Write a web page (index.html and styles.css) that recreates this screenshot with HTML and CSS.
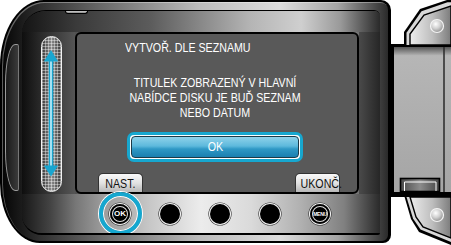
FILE: index.html
```html
<!DOCTYPE html>
<html lang="cs">
<head>
<meta charset="utf-8">
<title>Vytvoř. dle seznamu</title>
<link rel="stylesheet" href="styles.css">
</head>
<body>
<div class="device">
  <div class="cam">
    <div class="rim">
      <div class="grip"><div class="grip-strip"></div></div>
      <div class="face">
        <div class="topband"><span class="notch"></span></div>
        <div class="mid">
          <div class="leftcol">
            <div class="slider">
              <svg viewBox="0 0 18 153" width="18" height="153">
                <path d="M9 22 V131" stroke="#17a3cd" stroke-width="4.5"/>
                <path d="M9 22 V131" stroke="#c9f1fd" stroke-width="1.6"/>
                <polygon points="9,13 1.8,24.5 16.2,24.5" fill="#19a6d0"/>
                <polygon points="9,139.5 1.8,128.5 16.2,128.5" fill="#19a6d0"/>
              </svg>
            </div>
          </div>
          <div class="screen">
            <div class="title"><span class="nar">VYTVOŘ. DLE SEZNAMU</span></div>
            <div class="msg">TITULEK ZOBRAZENÝ V HLAVNÍ<br>NABÍDCE DISKU JE BUĎ SEZNAM<br>NEBO DATUM</div>
            <div class="ok-ring"><div class="ok-btn"><span class="nar">OK</span></div></div>
            <div class="tabs">
              <div class="tab"><span class="nar">NAST.</span></div>
              <div class="tab"><span class="nar">UKONČ.</span></div>
            </div>
          </div>
          <div class="rightcol"></div>
        </div>
        <div class="botband">
          <div class="keys">
            <div class="slot"><div class="ring"><div class="key key-label">OK</div></div></div>
            <div class="slot"><div class="key"></div></div>
            <div class="slot"><div class="key"></div></div>
            <div class="slot"><div class="key"></div></div>
            <div class="slot"><div class="key key-label key-menu">MENU</div></div>
          </div>
        </div>
      </div>
    </div>
  </div>
  <svg class="hinge" width="60" height="245" viewBox="0 0 60 245">
    <defs>
      <linearGradient id="kg" x1="0" x2="1" y1="0" y2="0">
        <stop offset="0" stop-color="#ededed"/>
        <stop offset="0.55" stop-color="#bdbdbd"/>
        <stop offset="1" stop-color="#7c7c7c"/>
      </linearGradient>
      <linearGradient id="mg" x1="0" x2="0" y1="0" y2="1">
        <stop offset="0" stop-color="#555"/>
        <stop offset="0.06" stop-color="#b6b6b6"/>
        <stop offset="1" stop-color="#a5a5a5"/>
      </linearGradient>
      <linearGradient id="sg" x1="0" x2="1" y1="0" y2="0">
        <stop offset="0" stop-color="#4a4a4a"/>
        <stop offset="0.5" stop-color="#8c8c8c"/>
        <stop offset="1" stop-color="#444"/>
      </linearGradient>
      <radialGradient id="screw" cx="0.4" cy="0.35" r="0.7">
        <stop offset="0" stop-color="#fff"/>
        <stop offset="0.5" stop-color="#d0d0d0"/>
        <stop offset="1" stop-color="#8a8a8a"/>
      </radialGradient>
    </defs>
    <rect x="0" y="44" width="60" height="153" fill="#000"/>
    <rect x="3" y="47" width="57" height="145" fill="url(#mg)"/>
    <path d="M53 47 V192" stroke="#2a2a2a" stroke-width="1.5"/>
    <rect x="9.5" y="178.5" width="39" height="13" fill="url(#sg)" stroke="#000" stroke-width="1.6"/>
    <path d="M13.5 191 V182 H45 V191" fill="none" stroke="#fff" stroke-width="1"/>
    <polygon points="13,47 13,32 29,9 56,0 60,0 60,47" fill="#000"/>
    <polygon points="15.5,45 15.5,32.8 30.5,11.2 56.5,2.3 60,2.3 60,45" fill="#d8d8d8"/>
    <polygon points="19,45 19,34 33,15 60,6 60,45" fill="url(#kg)" stroke="#000" stroke-width="1.4"/>
    <circle cx="46" cy="26" r="6.5" fill="url(#screw)" stroke="#f4f4f4" stroke-width="1.2"/>
    <polygon points="13,195 20,219 28,232 60,245 60,195" fill="#000"/>
    <polygon points="15.5,197 22,218.5 29.5,229.5 60,242 60,197" fill="#d8d8d8"/>
    <polygon points="19,197 25,217 32,227 60,238 60,197" fill="url(#kg)" stroke="#000" stroke-width="1.4"/>
    <circle cx="46" cy="215" r="6.5" fill="url(#screw)" stroke="#f4f4f4" stroke-width="1.2"/>
  </svg>
</div>
</body>
</html>
```

FILE: styles.css
```css
* { box-sizing: border-box; }
html, body { margin: 0; padding: 0; background: #fff; }
body {
  width: 451px;
  height: 245px;
  overflow: hidden;
  font-family: "Liberation Sans", Arial, sans-serif;
}
.nar { display: inline-block; transform: scaleX(0.82); transform-origin: 50% 50%; white-space: nowrap; }
.device { display: flex; width: 451px; height: 245px; }
.cam {
  flex: none;
  width: 391px;
  height: 243px;
  background: #000;
  padding: 2px 3px 2px 2px;
  border-radius: 44px 10px 8px 40px / 66px 10px 8px 60px;
}
.rim {
  display: flex;
  height: 100%;
  padding: 8px 8px 6px 0;
  border-radius: 42px 8px 6px 38px / 64px 8px 6px 58px;
  background: linear-gradient(90deg, #050505 0%, #303030 10%, #666 25%, #bbb 51%, #dcdcdc 72%, #a5a5a5 87%, #2a2a2a 100%);
  box-shadow: inset 1px 1px 0 rgba(255,255,255,.35);
}
.grip { flex: none; width: 20px; padding: 34px 3px 44px 3px; }
.grip-strip {
  height: 100%;
  border: 1px solid #9a9a9a;
  border-right-color: #777;
  border-radius: 10px 2px 2px 10px / 40px 2px 2px 40px;
  background: linear-gradient(90deg, #1a1a1a, #3a3a3a);
}
.face {
  flex: none;
  width: 358px;
  display: flex;
  flex-direction: column;
  border-top: 1px solid #000;
  border-bottom: 2px solid #000;
  border-radius: 24px 6px 2px 20px;
  overflow: hidden;
}
.topband {
  flex: none;
  height: 21px;
  background: linear-gradient(90deg, #141414 0%, #3a3a3a 15%, #5c5c5c 36%, #b5b5b5 64%, #cfcfcf 78%, #999 89%, #2a2a2a 100%);
}
.notch {
  display: block;
  margin-left: 43px;
  width: 23px;
  height: 3px;
  background: linear-gradient(#d0d0d0, #8a8a8a);
  border: 1px solid #000;
  border-top: 0;
  border-radius: 0 0 5px 5px;
}
.mid { flex: none; height: 162px; display: flex; }
.leftcol {
  flex: none;
  width: 53px;
  padding: 4px 0 0 19px;
  background: linear-gradient(90deg, #0e0e0e, #2a2a2a 35%, #444 75%, #555);
}
.slider {
  width: 21px;
  height: 156px;
  border: 1.5px solid #f2f2f2;
  border-radius: 11px;
  overflow: hidden;
  background:
    repeating-linear-gradient(0deg, rgba(255,255,255,.4) 0 1px, transparent 1px 3px),
    repeating-linear-gradient(90deg, rgba(255,255,255,.4) 0 1px, transparent 1px 3px),
    linear-gradient(90deg, #3a3a3a, #8a8a8a 50%, #3a3a3a);
}
.slider svg { display: block; }
.screen {
  flex: none;
  width: 284px;
  border: 2px solid #000;
  border-radius: 6px;
  background: #595959;
  display: flex;
  flex-direction: column;
  color: #fff;
  font-size: 13px;
  line-height: 15px;
}
.title { padding: 6px 0 0 48px; white-space: nowrap; line-height: 15px; }
.title .nar { transform-origin: 0 50%; }
.msg {
  margin-top: 20px;
  padding-right: 4px;
  text-align: center;
  white-space: nowrap;
  transform: scaleX(0.82);
  transform-origin: 138px 50%;
}
.ok-ring {
  margin: 12px 0 0 50px;
  width: 176px;
  height: 30px;
  border: 3px solid #17a7cf;
  border-radius: 7px;
  padding: 1px;
  background: #fff;
}
.ok-btn {
  height: 100%;
  border: 1px solid #1c3a48;
  border-radius: 4px;
  background: linear-gradient(#8fd2ea, #5db9dc 45%, #2f98c5 60%, #1a7fb0);
  color: #fff;
  text-align: center;
  line-height: 20px;
}
.tabs {
  margin-top: auto;
  display: flex;
  justify-content: space-between;
  padding: 0 17px 0 21px;
}
.tab {
  width: 45px;
  height: 19px;
  border: 1px solid #333;
  border-bottom: 0;
  border-radius: 5px 5px 0 0;
  background: linear-gradient(#fafafa, #e2e2e2 50%, #b8b8b8);
  color: #111;
  text-align: center;
  line-height: 19px;
  white-space: nowrap;
}
.rightcol { flex: 1; background: linear-gradient(90deg, #4a4a4a, #262626); }
.botband {
  flex: none;
  height: 39px;
  background: linear-gradient(90deg, #181818 0%, #444 8%, #777 15%, #999 22%, #c8c8c8 36%, #ececec 50%, #dadada 64%, #b0b0b0 78%, #808080 90%, #2a2a2a 100%);
}
.keys { display: flex; align-items: center; height: 100%; padding-left: 73px; }
.slot { flex: none; width: 50px; height: 100%; display: flex; justify-content: center; align-items: center; }
.ring {
  flex: none;
  width: 43px;
  height: 43px;
  border-radius: 50%;
  border: 4px solid #15a7cf;
  box-shadow: 0 0 0 1px #fff, inset 0 0 0 1px #fff;
  display: flex;
  justify-content: center;
  align-items: center;
}
.key {
  flex: none;
  width: 20px;
  height: 20px;
  border-radius: 50%;
  background: #000;
  box-shadow: 0 0 0 1px #f4f4f4, 0 0 0 1.6px #333;
}
.key-label {
  display: flex;
  justify-content: center;
  align-items: center;
  color: #fff;
  font-weight: bold;
  font-size: 8px;
  box-shadow: 0 0 0 1px #f4f4f4, 0 0 0 1.6px #333, inset 0 0 0 2px #000, inset 0 0 0 3px #ddd;
}
.key-menu { font-size: 5px; letter-spacing: -0.3px; }
.hinge { flex: none; display: block; }
```
